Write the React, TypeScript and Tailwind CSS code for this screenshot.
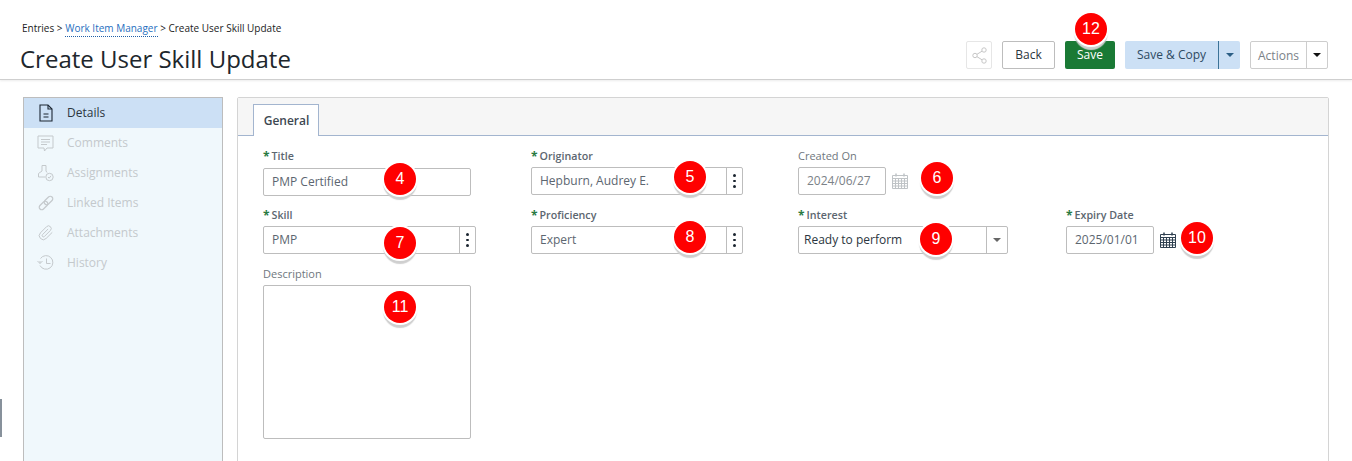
import type { ReactNode } from "react";

const BADGES = [
  { n: 4, x: 400, y: 179 },
  { n: 5, x: 690, y: 177 },
  { n: 6, x: 937, y: 178 },
  { n: 7, x: 400, y: 243 },
  { n: 8, x: 690, y: 237 },
  { n: 9, x: 936, y: 239 },
  { n: 10, x: 1197, y: 238 },
  { n: 11, x: 400, y: 307 },
  { n: 12, x: 1091, y: 29 },
];

function DetailsIcon() {
  return (
    <svg width="14" height="18" viewBox="0 0 14 18" fill="none" stroke="#1c2733" strokeWidth="1.1">
      <path d="M1 1h8l4 4v12H1z" />
      <path d="M9 1v4h4M4.500 10h5M4.500 13h5" />
    </svg>
  );
}

function CommentsIcon() {
  return (
    <svg width="17" height="17" viewBox="0 0 17 17" fill="none" stroke="#c4c9cc" strokeWidth="1">
      <path d="M1 1h15v12h-6l-2.500 3-0.500-3H1z" />
      <path d="M4 4.500h9M4 7h9M4 9.500h6" />
    </svg>
  );
}

function AssignmentsIcon() {
  return (
    <svg width="16" height="17" viewBox="0 0 16 17" fill="none" stroke="#c4c9cc" strokeWidth="1">
      <path d="M4 0.500h4v5.500l1 1.500M4 0.500v5.500L0.500 8.500v3.500h6.500" />
      <circle cx="11.500" cy="12" r="3.700" />
      <path d="M10 12l1.200 1.200 1.800-2.400" />
    </svg>
  );
}

function LinkIcon() {
  return (
    <svg width="16" height="16" viewBox="0 0 16 16" fill="none" stroke="#c4c9cc" strokeWidth="1.200">
      <rect x="-2.500" y="-5" width="5" height="10" rx="2.500" transform="translate(10.500 5.500) rotate(45)" />
      <rect x="-2.500" y="-5" width="5" height="10" rx="2.500" transform="translate(5.500 10.500) rotate(45)" />
    </svg>
  );
}

function ClipIcon() {
  return (
    <svg width="16" height="16" viewBox="0 0 24 24" fill="none" stroke="#c4c9cc" strokeWidth="1.500">
      <path d="M21.400 11l-9.200 9.200a6 6 0 0 1-8.500-8.500l9.200-9.200a4 4 0 0 1 5.700 5.700l-9.200 9.200a2 2 0 0 1-2.800-2.800l8.500-8.500" />
    </svg>
  );
}

function HistoryIcon() {
  return (
    <svg width="17" height="16" viewBox="0 0 17 16" fill="none" stroke="#c4c9cc" strokeWidth="1">
      <path d="M3.500 3.500a6.800 6.800 0 1 1-0.500 7" />
      <path d="M0.500 6l2.500 2.500L5.500 6M3 8.500V6M9.500 3.500v5h4" />
    </svg>
  );
}

function ShareIcon() {
  return (
    <svg width="15" height="17" viewBox="0 0 15 17" fill="none" stroke="#c6c6c6" strokeWidth="1">
      <circle cx="12" cy="3" r="2.200" />
      <circle cx="3" cy="8.500" r="2.200" />
      <circle cx="12" cy="14" r="2.200" />
      <path d="M5 7.300l5-3.100M5 9.700l5 3.100" />
    </svg>
  );
}

function CalendarIcon({ color }: { color: string }) {
  return (
    <svg width="16" height="16" viewBox="0 0 16 16" fill="none" stroke={color} strokeWidth="1">
      <path d="M0.500 2.500h15v13H0.500zM0.500 5.500h15M0.500 8h15M0.500 10.500h15M0.500 13h15" />
      <path d="M3.500 5.500v10M6.500 5.500v10M9.500 5.500v10M12.500 5.500v10" />
      <path d="M4 0.500v3M12 0.500v3" strokeWidth="1.500" />
    </svg>
  );
}

function Kebab() {
  return (
    <span className="flex w-[16px] shrink-0 flex-col items-center justify-center gap-[3px] border-l border-[#bdbdbd]">
      <span className="h-[2.500px] w-[2.500px] rounded-full bg-[#1b2530]" />
      <span className="h-[2.500px] w-[2.500px] rounded-full bg-[#1b2530]" />
      <span className="h-[2.500px] w-[2.500px] rounded-full bg-[#1b2530]" />
    </span>
  );
}

function Caret({ color }: { color: string }) {
  return <span className="h-0 w-0 border-x-[4px] border-t-[4px] border-x-transparent" style={{ borderTopColor: color }} />;
}

function Label({ children, required }: { children: ReactNode; required?: boolean }) {
  return (
    <div className={`flex h-[17px] items-center leading-none ${required ? "text-[10.700px] font-semibold text-[#5c6670]" : "pb-[2px] text-[11px] text-[#6f777e]"}`}>
      {required && <span className="mr-[2px] text-[12px] font-bold text-[#2a7a42]">*</span>}
      {children}
    </div>
  );
}

function Box({ children, className }: { children: ReactNode; className: string }) {
  return <div className={`flex h-[28px] rounded-[2px] border border-[#bdbdbd] bg-white text-[12px] ${className}`}>{children}</div>;
}

const NAV = [
  { label: "Comments", icon: <CommentsIcon /> },
  { label: "Assignments", icon: <AssignmentsIcon /> },
  { label: "Linked Items", icon: <LinkIcon /> },
  { label: "Attachments", icon: <ClipIcon /> },
  { label: "History", icon: <HistoryIcon /> },
];

export default function App() {
  return (
    <div className="relative h-[461px] w-[1352px] overflow-hidden bg-white font-['Open_Sans',sans-serif] text-[#2b3640]">
      <header className="flex h-[80px] items-start justify-between border-b border-[#cfcfcf] pl-[20px] pr-[24px] shadow-[0_1px_2px_rgba(0,0,0,0.08)]">
        <div>
          <div className="ml-[2px] mt-[20px] flex h-[17px] items-center text-[10px] text-[#222]">
            Entries &gt;&nbsp;
            <span className="border-b border-dotted border-[#1f5fa8] text-[#1f6fc0]">Work Item Manager</span>
            &nbsp;&gt; Create User Skill Update
          </div>
          <h1 className="mt-[5px] text-[24px] leading-[33px] text-[#20262c]">Create User Skill Update</h1>
        </div>
        <div className="mt-[41px] flex h-[28px] text-[12px]">
          <button className="flex w-[26px] items-center justify-center rounded-[2px] border border-[#e6e6e6]">
            <ShareIcon />
          </button>
          <button className="ml-[10px] w-[53px] rounded-[2px] border border-[#bdbdbd] text-[#2b3640]">Back</button>
          <button className="ml-[10px] w-[50px] rounded-[2px] bg-[#1a7a35] text-white">Save</button>
          <div className="ml-[10px] flex w-[115px] rounded-[2px] bg-[#cce0f5] text-[#2c4a63]">
            <span className="flex w-[94px] items-center justify-center border-r border-[#3c7397]">Save &amp; Copy</span>
            <span className="flex flex-1 items-center justify-center">
              <Caret color="#2c5f85" />
            </span>
          </div>
          <div className="ml-[10px] flex w-[78px] rounded-[2px] border border-[#cdcdcd] text-[#7b8288]">
            <span className="flex w-[56px] items-center justify-center border-r border-[#cdcdcd] pt-[2px]">Actions</span>
            <span className="flex flex-1 items-center justify-center">
              <Caret color="#111" />
            </span>
          </div>
        </div>
      </header>

      <div className="flex pl-[23px] pt-[17px]">
        <nav className="h-[400px] w-[200px] border border-[#bdbdbd] bg-[#f0f8fc]">
          <div className="flex h-[30px] items-center bg-[#cce0f5] pl-[15px] text-[12px] text-[#2b3640]">
            <span className="flex w-[14px] justify-center">
              <DetailsIcon />
            </span>
            <span className="ml-[14px]">Details</span>
          </div>
          {NAV.map((item) => (
            <div key={item.label} className="flex h-[30px] items-center pl-[13px] text-[12px] text-[#c4c9cc]">
              <span className="flex w-[17px] justify-center">{item.icon}</span>
              <span className="ml-[13px]">{item.label}</span>
            </div>
          ))}
        </nav>

        <main className="ml-[14px] h-[400px] w-[1092px] rounded-t-[2px] border border-[#d4d4d4]">
          <div className="flex h-[38px] items-end border-b border-[#a3b5cf] bg-[#f6f6f6] pl-[15px]">
            <div className="-mb-px flex h-[32px] w-[66px] items-center justify-center border border-b-0 border-[#a3b5cf] bg-white pl-[1px] text-[12px] font-semibold text-[#3d4852]">
              General
            </div>
          </div>

          <div className="grid grid-cols-[268px_267px_268px_1fr] pl-[25px] pt-[12px]">
            <div>
              <Label required>Title</Label>
              <Box className="mt-[3px] w-[208px] items-center pl-[8px] text-[#5c6670]">PMP Certified</Box>
            </div>
            <div>
              <Label required>Originator</Label>
              <Box className="mt-[2px] w-[212px] text-[#5c6670]">
                <span className="flex flex-1 items-center pl-[8px]">Hepburn, Audrey E.</span>
                <Kebab />
              </Box>
            </div>
            <div>
              <Label>Created On</Label>
              <div className="mt-[2px] flex items-center">
                <Box className="w-[88px] items-center pl-[8px] text-[#7b8288]">2024/06/27</Box>
                <span className="ml-[6px] flex">
                  <CalendarIcon color="#bfc3c6" />
                </span>
              </div>
            </div>
            <div />

            <div className="mt-[11px]">
              <Label required>Skill</Label>
              <Box className="mt-[2px] w-[213px] text-[#5c6670]">
                <span className="flex flex-1 items-center pl-[8px]">PMP</span>
                <Kebab />
              </Box>
            </div>
            <div className="mt-[11px]">
              <Label required>Proficiency</Label>
              <Box className="mt-[2px] w-[212px] text-[#5c6670]">
                <span className="flex flex-1 items-center pl-[8px]">Expert</span>
                <Kebab />
              </Box>
            </div>
            <div className="mt-[11px]">
              <Label required>Interest</Label>
              <Box className="mt-[2px] w-[210px] text-[#2b3640]">
                <span className="flex flex-1 items-center pl-[5px]">Ready to perform</span>
                <span className="flex w-[21px] items-center justify-center border-l border-[#bdbdbd]">
                  <Caret color="#666" />
                </span>
              </Box>
            </div>
            <div className="mt-[11px]">
              <Label required>Expiry Date</Label>
              <div className="mt-[2px] flex items-center">
                <Box className="w-[88px] items-center pl-[8px] text-[#5c6670]">2025/01/01</Box>
                <span className="ml-[6px] flex">
                  <CalendarIcon color="#2f4050" />
                </span>
              </div>
            </div>

            <div className="mt-[12px]">
              <Label>Description</Label>
              <div className="mt-[2px] h-[154px] w-[208px] rounded-[2px] border border-[#bdbdbd]" />
            </div>
          </div>
        </main>
      </div>

      <span className="absolute left-0 top-[399px] h-[38px] w-[2px] bg-[#87919b]" />

      {BADGES.map((b) => (
        <span
          key={b.n}
          className="absolute flex h-[32px] w-[32px] items-center justify-center rounded-full bg-[#ff0000] font-['Liberation_Sans',sans-serif] text-[16px] text-white shadow-[0_0_0_2px_#fff,0_4px_1px_1px_#cfcfcf]"
          style={{ left: b.x - 16, top: b.y - 16 }}
        >
          {b.n}
        </span>
      ))}
    </div>
  );
}
